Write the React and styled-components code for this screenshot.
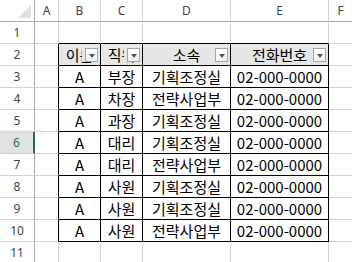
import React from 'react'
import styled, { createGlobalStyle } from 'styled-components'

const GRID = '#d4d4d4'
const INK = '#000'

const columns = ['A', 'B', 'C', 'D', 'E', 'F']
const headers = ['이름', '직위', '소속', '전화번호']
const rows = [
  ['A', '부장', '기획조정실', '02-000-0000'],
  ['A', '차장', '전략사업부', '02-000-0000'],
  ['A', '과장', '기획조정실', '02-000-0000'],
  ['A', '대리', '기획조정실', '02-000-0000'],
  ['A', '대리', '전략사업부', '02-000-0000'],
  ['A', '사원', '기획조정실', '02-000-0000'],
  ['A', '사원', '기획조정실', '02-000-0000'],
  ['A', '사원', '전략사업부', '02-000-0000'],
]
const selectedRow = 6

function App() {
  const lastRow = rows.length + 2

  return (
    <>
      <GlobalStyle />
      <Sheet>
        <Corner>
          <CornerMark />
        </Corner>
        {columns.map((c) => (
          <ColHeader key={c}>{c}</ColHeader>
        ))}

        <RowHeader>1</RowHeader>
        <Cell />
        {headers.map((h) => (
          <Cell key={h} $bottom={INK} />
        ))}
        <Cell />

        <RowHeader>2</RowHeader>
        <Cell $right={INK} />
        {headers.map((h) => (
          <HeadCell key={h}>
            <HeadText>{h}</HeadText>
            <FilterButton>
              <Arrow />
            </FilterButton>
          </HeadCell>
        ))}
        <Cell />

        {rows.map((row, i) => {
          const n = i + 3
          return (
            <React.Fragment key={n}>
              <RowHeader $selected={n === selectedRow}>{n}</RowHeader>
              <Cell $right={INK} />
              {row.map((v, j) => (
                <DataCell key={j}>{v}</DataCell>
              ))}
              <Cell />
            </React.Fragment>
          )
        })}

        <RowHeader>{lastRow + 1}</RowHeader>
        {columns.map((c) => (
          <Cell key={c} />
        ))}
      </Sheet>
    </>
  )
}

const GlobalStyle = createGlobalStyle`
  html, body {
    margin: 0;
    padding: 0;
    background: #fff;
    overflow: hidden;
  }
`

const Sheet = styled.div`
  display: grid;
  grid-template-columns: 35px 24px 42px 42px 88px 98px 24px;
  grid-auto-rows: 22px;
  width: 352px;
  height: 262px;
  overflow: hidden;
  font-family: 'Noto Sans CJK KR', 'Noto Sans', sans-serif;
`

const Corner = styled.div`
  position: relative;
  box-sizing: border-box;
  border-right: 1px solid #ababab;
  border-bottom: 1px solid #ababab;
`

const CornerMark = styled.div`
  position: absolute;
  right: 3px;
  bottom: 3px;
  width: 0;
  height: 0;
  border-left: 13px solid transparent;
  border-bottom: 13px solid #dfdfdf;
`

const ColHeader = styled.div`
  box-sizing: border-box;
  display: flex;
  align-items: center;
  justify-content: center;
  border-right: 1px solid ${GRID};
  border-bottom: 1px solid #ababab;
  color: #444;
  font-family: 'Noto Sans', 'Liberation Sans', sans-serif;
  font-size: 12px;
  padding-bottom: 1px;
`

const RowHeader = styled.div`
  box-sizing: border-box;
  display: flex;
  align-items: center;
  justify-content: center;
  background: ${(p) => (p.$selected ? '#e1e1e1' : '#fff')};
  border-right: ${(p) => (p.$selected ? '2px solid #217346' : '1px solid #ababab')};
  border-bottom: 1px solid ${GRID};
  color: ${(p) => (p.$selected ? '#217346' : '#444')};
  font-family: 'Noto Sans', 'Liberation Sans', sans-serif;
  font-size: 12px;
  padding-bottom: 1px;
`

const Cell = styled.div`
  box-sizing: border-box;
  border-right: 1px solid ${(p) => p.$right || GRID};
  border-bottom: 1px solid ${(p) => p.$bottom || GRID};
`

const HeadCell = styled(Cell).attrs({ $right: INK, $bottom: INK })`
  position: relative;
  display: flex;
  align-items: center;
  justify-content: center;
  overflow: hidden;
  background: #e7e6e6;
  font-size: 15px;
  color: #000;
`

const HeadText = styled.span`
  white-space: nowrap;
  line-height: 1;
`

const FilterButton = styled.div`
  position: absolute;
  top: 4px;
  right: 2px;
  box-sizing: border-box;
  width: 13px;
  height: 14px;
  display: flex;
  align-items: center;
  justify-content: center;
  border: 1px solid #a6a6a6;
  background: linear-gradient(#ffffff, #f1f1f1);
  box-shadow: -3px 0 0 #e7e6e6;
`

const Arrow = styled.div`
  width: 0;
  height: 0;
  border-left: 3.5px solid transparent;
  border-right: 3.5px solid transparent;
  border-top: 4px solid #555;
  margin-top: 1px;
`

const DataCell = styled(Cell).attrs({ $right: INK, $bottom: INK })`
  display: flex;
  align-items: center;
  justify-content: center;
  white-space: nowrap;
  font-size: 15px;
  color: #000;
  line-height: 1;
`

export default App
